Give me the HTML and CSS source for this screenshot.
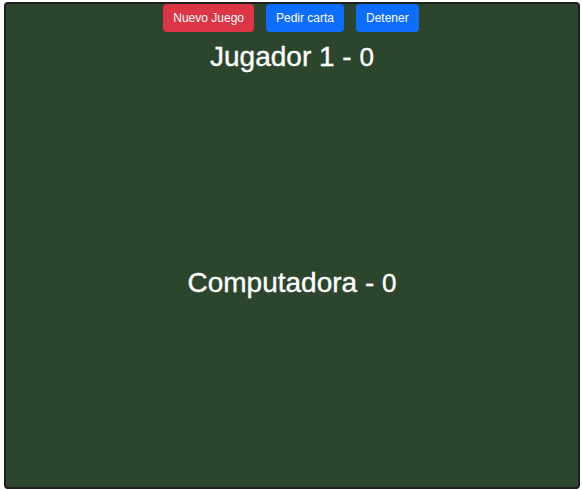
FILE: index.html
```html
<!DOCTYPE html>
<html lang="es">
<head>
<meta charset="utf-8">
<title>Blackjack</title>
<link rel="stylesheet" href="styles.css">
</head>
<body>
<main class="table">
  <div class="actions">
    <button class="btn btn-red">Nuevo Juego</button>
    <button class="btn btn-blue">Pedir carta</button>
    <button class="btn btn-blue">Detener</button>
  </div>
  <h1 class="player">Jugador 1 - <small>0</small></h1>
  <div class="cards"></div>
  <h1 class="player">Computadora - <small>0</small></h1>
  <div class="cards"></div>
</main>
</body>
</html>
```

FILE: styles.css
```css
html, body {
  margin: 0;
  padding: 0;
  background: #ffffff;
}
body {
  padding: 2px 2px 1px 4px;
  height: 490px;
  box-sizing: border-box;
  font-family: "Liberation Sans", Arial, sans-serif;
}
.table {
  box-sizing: border-box;
  height: 487px;
  background: #2c462e;
  border: 2px solid #1e1e1e;
  border-radius: 4px;
  display: flex;
  flex-direction: column;
  align-items: center;
  color: #ffffff;
}
.actions {
  display: flex;
  gap: 12px;
  margin-top: 0;
  margin-right: 2px;
  height: 28px;
}
.btn {
  font-family: "Liberation Sans", Arial, sans-serif;
  font-size: 12px;
  color: #ffffff;
  border: none;
  border-radius: 4px;
  padding: 0 10px;
  height: 28px;
  cursor: pointer;
}
.btn-red { background: #dc3545; }
.btn-blue { background: #0d6efd; }
.player {
  margin: 0;
  font-size: 28px;
  font-weight: 400;
  line-height: 34px;
  margin-top: 8px;
  -webkit-text-stroke: 0.35px #ffffff;
}
.player small {
  font-size: 26px;
  font-family: "Liberation Sans", Arial, sans-serif;
}
.cards {
  height: 184px;
}
```
